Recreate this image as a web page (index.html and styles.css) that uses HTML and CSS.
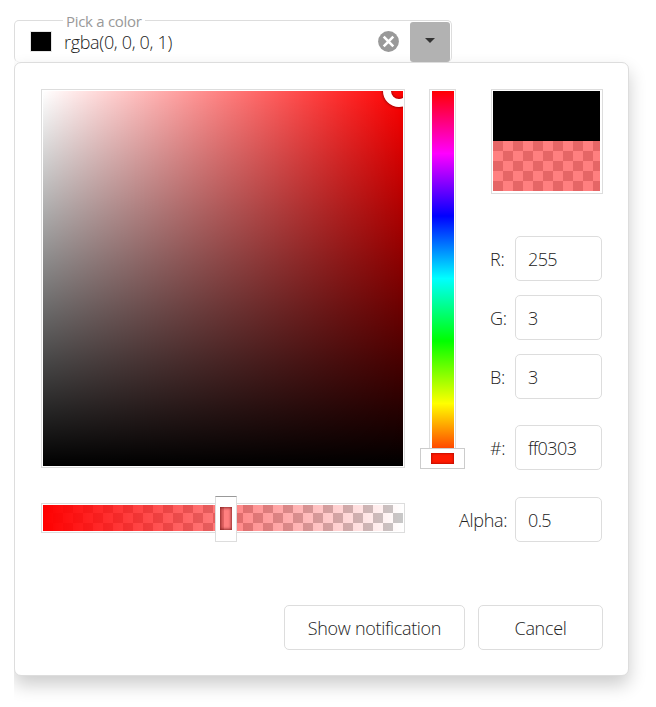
FILE: index.html
```html
<!DOCTYPE html>
<html lang="en">
<head>
<meta charset="utf-8">
<title>Color picker</title>
<link rel="stylesheet" href="styles.css">
</head>
<body>
<main class="picker">
  <div class="field">
    <span class="field-label">Pick a color</span>
    <span class="swatch"></span>
    <span class="field-value">rgba(0, 0, 0, 1)</span>
    <svg class="clear" viewBox="0 0 21 21"><circle cx="10.5" cy="10.5" r="10.4" fill="#999"/><path d="M5.7 5.7l9.6 9.6M15.3 5.7l-9.6 9.6" stroke="#fff" stroke-width="2.6"/></svg>
    <div class="drop"><svg viewBox="0 0 10 5"><path d="M0 0h10L5 5z" fill="#333"/></svg></div>
  </div>
  <section class="popup">
    <div class="body">
      <div class="left">
        <div class="palette"><div class="palette-area"><span class="ring"></span></div></div>
        <div class="alpha"><div class="alpha-bar"></div><span class="alpha-handle"><i></i></span></div>
      </div>
      <div class="hue"><div class="hue-bar"></div><span class="hue-handle"><i></i></span></div>
      <div class="side">
        <div class="preview"><div class="current"></div><div class="next"></div></div>
        <div class="row row-r"><label>R:</label><div class="input">255</div></div>
        <div class="row"><label>G:</label><div class="input">3</div></div>
        <div class="row"><label>B:</label><div class="input">3</div></div>
        <div class="row row-hex"><label>#:</label><div class="input">ff0303</div></div>
        <div class="row row-alpha"><label>Alpha:</label><div class="input">0.5</div></div>
      </div>
    </div>
    <div class="actions"><div class="button notify">Show notification</div><div class="button cancel">Cancel</div></div>
  </section>
</main>
</body>
</html>
```
FILE: styles.css
```css
* { box-sizing: border-box; }
body {
  margin: 0;
  background: #fff;
  color: #222;
  font: 340 18px/24px "Open Sans", "Noto Sans", sans-serif;
  letter-spacing: -0.32px;
}
.picker {
  width: 642px;
  height: 707px;
  margin-left: 14px;
  padding-top: 20px;
  overflow: hidden;
}
.field {
  position: relative;
  display: flex;
  align-items: center;
  width: 438px;
  height: 42px;
  padding: 0 1px 0 16px;
  border: 1px solid #ddd;
  border-bottom: 0;
  border-radius: 5px;
}
.field-label {
  position: absolute;
  left: 48px;
  top: -10px;
  padding: 0 3px;
  background: #fff;
  color: #999;
  font-size: 15px;
  line-height: 20px;
  font-weight: 400;
  letter-spacing: -0.3px;
}
.swatch {
  width: 20px;
  height: 19px;
  background: #000;
  box-shadow: 0 0 0 1px #e5e5e5;
}
.field-value { margin: 1px auto 0 13px; }
.clear { width: 21px; height: 21px; margin: 0 11px 0 0; }
.drop {
  display: flex;
  align-items: center;
  justify-content: center;
  width: 40px;
  height: 40px;
  margin-top: 1px;
  border-radius: 3px;
  background: #b2b2b2;
}
.drop svg { width: 10px; height: 5px; margin-top: -3px; }
.popup {
  width: 615px;
  height: 614px;
  padding: 26px 25px 25px 26px;
  border: 1px solid #ddd;
  border-radius: 7px;
  background: #fff;
  box-shadow: 0 9px 18px rgba(0, 0, 0, .2);
}
.body { display: flex; height: 516px; }
.left { width: 364px; }
.palette {
  height: 379px;
  padding: 1px;
  border: 1px solid #ddd;
}
.palette-area {
  position: relative;
  height: 375px;
  overflow: hidden;
  background: linear-gradient(to bottom, transparent, #000), linear-gradient(to right, #fff, rgba(255, 255, 255, 0)), #f00;
}
.ring {
  position: absolute;
  left: 340px;
  top: -16px;
  width: 32px;
  height: 32px;
  border: 8px solid #fff;
  border-radius: 50%;
  box-shadow: 0 0 3px rgba(0, 0, 0, .7), inset 0 0 3px rgba(0, 0, 0, .6);
}
.alpha {
  position: relative;
  height: 30px;
  margin-top: 35px;
  padding: 1px;
  border: 1px solid #ddd;
}
.alpha-bar {
  height: 26px;
  background:
    linear-gradient(to right, #f00, rgba(255, 3, 3, 0)),
    conic-gradient(#fff 25%, #c8c8c8 0 50%, #fff 0 75%, #c8c8c8 0) 0 -2px / 20px 20px;
}
.alpha-handle {
  position: absolute;
  left: 173px;
  top: -8px;
  width: 22px;
  height: 46px;
  padding: 10px 4px 11px;
  border: 1px solid #ddd;
  border-top-color: #999;
  background: #fff;
}
.alpha-handle i {
  display: block;
  width: 12px;
  height: 23px;
  background: linear-gradient(to right, #e56666 4px, #ff8080 4px);
  box-shadow: inset 0 0 3px 1px rgba(90, 0, 0, .65);
}
.hue {
  position: relative;
  width: 27px;
  height: 379px;
  margin-left: 24px;
  padding: 1px 1px 1px 2px;
  border: 1px solid #ddd;
}
.hue-bar {
  width: 22px;
  height: 375px;
  background: linear-gradient(#f00, #f0f 16.67%, #00f 33.33%, #0ff 50%, #0f0 66.67%, #ff0 83.33%, #f00);
}
.hue-handle {
  position: absolute;
  left: -10px;
  top: 358px;
  width: 45px;
  height: 21px;
  padding: 4px 10px;
  border: 1px solid #ccc;
  background: #fff;
}
.hue-handle i {
  display: block;
  width: 23px;
  height: 11px;
  background: #ff1a00;
  box-shadow: inset 0 0 2px 1px rgba(130, 0, 0, .45);
}
.side { width: 147px; }
.preview {
  width: 112px;
  height: 105px;
  margin-left: 35px;
  padding: 1px 2px 1px 1px;
  border: 1px solid #ddd;
}
.current { height: 50px; background: #000; }
.next {
  height: 50px;
  background: conic-gradient(#ff8080 25%, #e56666 0 50%, #ff8080 0 75%, #e56666 0) 0 0 / 20px 20px;
}
.row {
  display: flex;
  align-items: center;
  justify-content: space-between;
  height: 45px;
  margin: 14px 1px 0 34px;
}
.row-r { margin-top: 42px; }
.row-hex { margin-top: 26px; }
.row-alpha { margin: 27px 1px 0 3px; }
.input {
  width: 87px;
  height: 45px;
  padding: 10px 12px;
  border: 1px solid #ddd;
  border-radius: 5px;
  letter-spacing: -0.6px;
}
.actions {
  display: flex;
  justify-content: flex-end;
  gap: 13px;
}
.button {
  height: 45px;
  padding-top: 10px;
  border: 1px solid #ddd;
  border-radius: 5px;
  text-align: center;
}
.notify { width: 181px; }
.cancel { width: 125px; }
```
